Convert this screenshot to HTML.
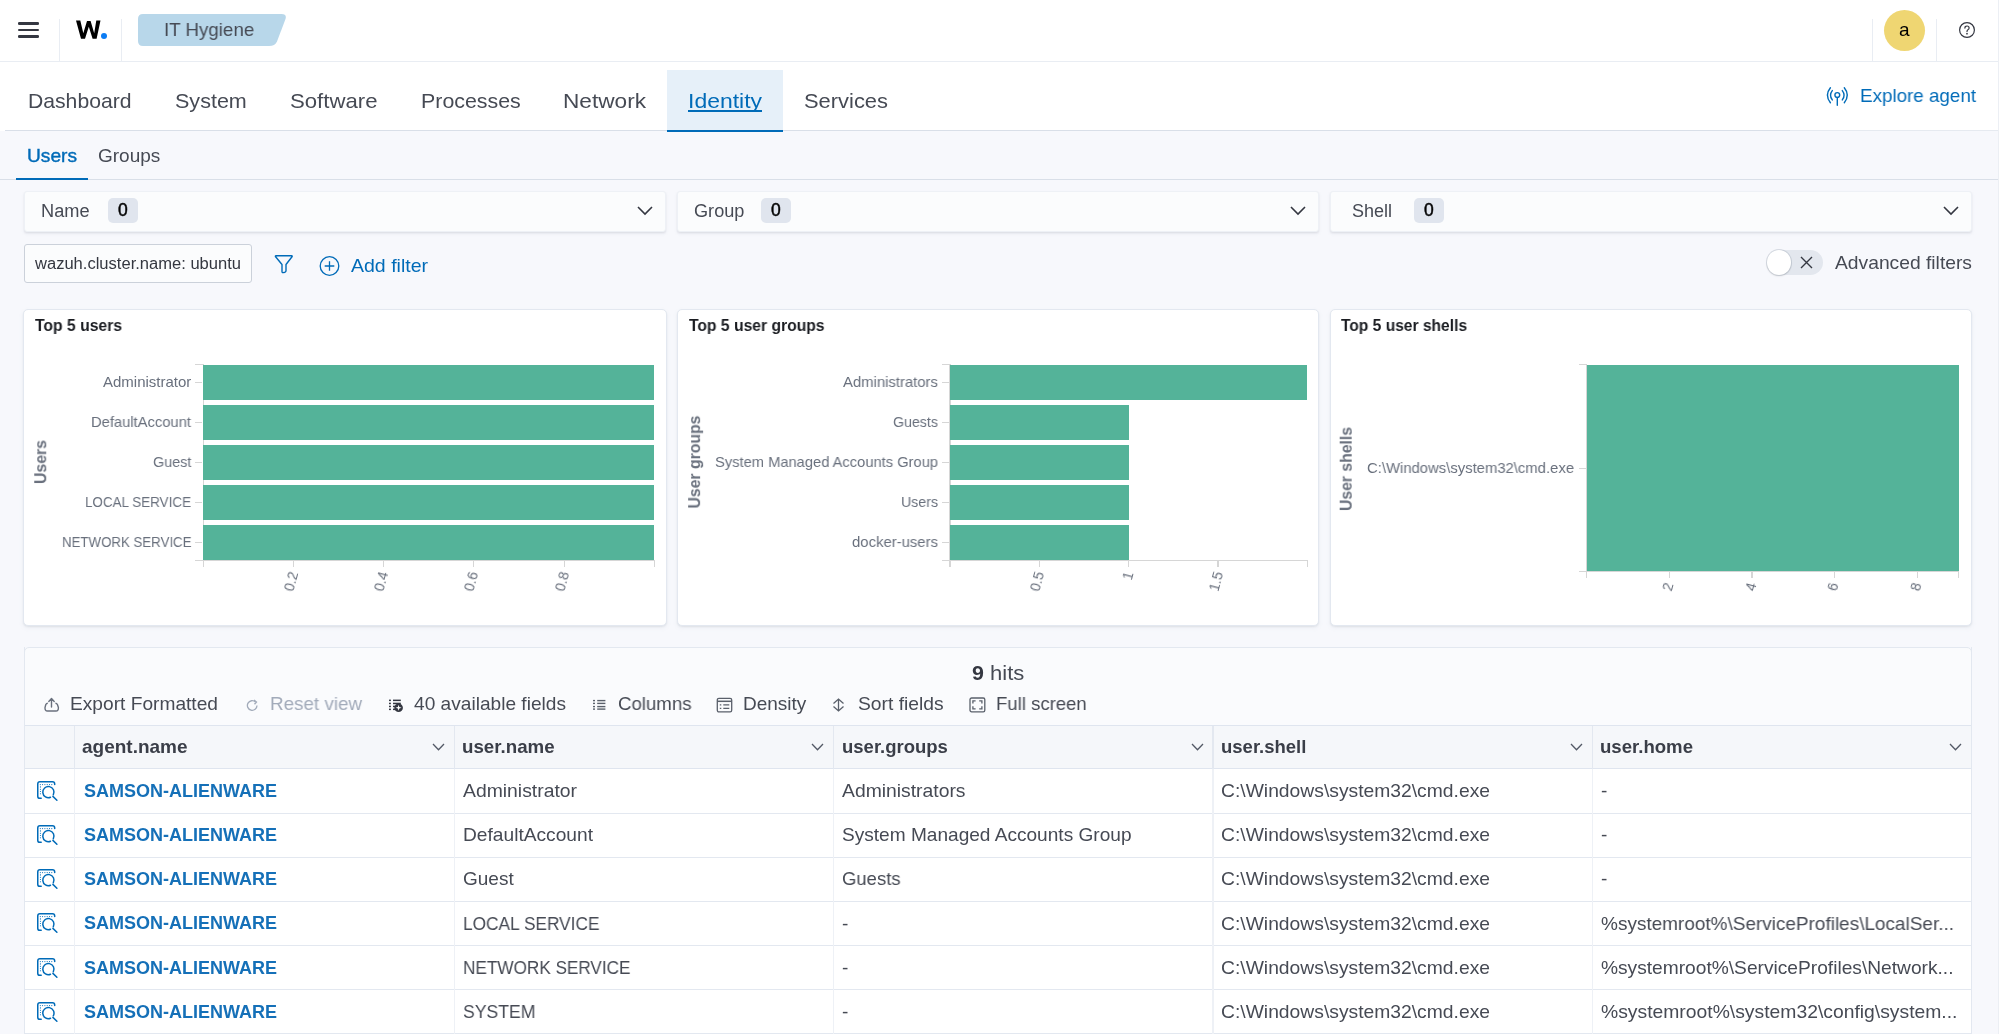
<!DOCTYPE html>
<html><head><meta charset="utf-8"><style>
html,body{margin:0;padding:0;}
body{width:1999px;height:1034px;overflow:hidden;position:relative;background:#f7f8fc;font-family:"Liberation Sans",sans-serif;}
.t{position:absolute;white-space:nowrap;line-height:1;transform-origin:0 0;will-change:transform;}
.r{position:absolute;box-sizing:border-box;}
svg{position:absolute;overflow:visible;}
</style></head><body>
<div class="r" style="left:0px;top:0px;width:1999px;height:62px;background:#ffffff;"></div>
<div class="r" style="left:0px;top:61px;width:1999px;height:1.5px;background:#e9edf3;"></div>
<div class="r" style="left:59px;top:19px;width:1px;height:43px;background:#e9edf3;"></div>
<div class="r" style="left:121px;top:19px;width:1px;height:43px;background:#e9edf3;"></div>
<div class="r" style="left:18px;top:22px;width:21px;height:2.6px;background:#343741;border-radius:1.3px;"></div>
<div class="r" style="left:18px;top:28.8px;width:21px;height:2.6px;background:#343741;border-radius:1.3px;"></div>
<div class="r" style="left:18px;top:35.2px;width:21px;height:2.6px;background:#343741;border-radius:1.3px;"></div>
<svg style="left:0;top:0" width="120" height="60"><path d="M76 20.4 H80.3 L83.3 33.2 L87 21 H90.6 L94.2 33.2 L96.3 20.4 H100.5 L96.6 38.8 H92.6 L88.8 26.8 L85 38.8 H81 Z" fill="#000"/></svg>
<div class="r" style="left:100.5px;top:33px;width:6px;height:6px;background:#0b7cf4;border-radius:50%;"></div>
<svg style="left:0;top:0" width="300" height="62"><path d="M143 14 H281.5 Q287 14 285.5 19 L277 41.5 Q275 46 269 46 H143 Q138 46 138 41 V19 Q138 14 143 14 Z" fill="#b8d7ea"/></svg>
<div class="t" style="left:164.40px;top:19.85px;font-size:19px;font-weight:400;color:#464a54;transform:scaleX(0.9855);">IT Hygiene</div>
<div class="r" style="left:1872.2px;top:19px;width:1px;height:43px;background:#e9edf3;"></div>
<div class="r" style="left:1936.2px;top:19px;width:1px;height:43px;background:#e9edf3;"></div>
<div class="r" style="left:1884px;top:9.5px;width:41px;height:41px;background:#efd672;border-radius:50%;"></div>
<div class="t" style="left:1899.21px;top:20.35px;font-size:19px;font-weight:400;color:#000000;">a</div>
<svg style="left:1958px;top:21px" width="18" height="18" viewBox="0 0 18 18"><circle cx="9" cy="9" r="7.4" fill="none" stroke="#343741" stroke-width="1.2"/><path d="M6.9 7.1 Q6.9 5 9 5 Q11.1 5 11.1 6.9 Q11.1 8.1 9.9 8.7 Q9 9.2 9 10.4" fill="none" stroke="#343741" stroke-width="1.2" stroke-linecap="round"/><circle cx="9" cy="12.7" r="0.85" fill="#343741"/></svg>
<div class="r" style="left:0px;top:62px;width:1999px;height:69px;background:#ffffff;"></div>
<div class="r" style="left:667px;top:70px;width:116px;height:61px;background:#e6f0f9;"></div>
<div class="r" style="left:5px;top:130.3px;width:1785px;height:1.2px;background:#d9dfe8;"></div>
<div class="r" style="left:1790px;top:130.3px;width:209px;height:1.2px;background:#e6eaf0;"></div>
<div class="r" style="left:667px;top:129.5px;width:116px;height:2.1px;background:#006bb8;"></div>
<div class="t" style="left:27.80px;top:90.15px;font-size:21px;font-weight:400;color:#464a54;transform:scaleX(1.0075);">Dashboard</div>
<div class="t" style="left:175.20px;top:90.15px;font-size:21px;font-weight:400;color:#464a54;transform:scaleX(1.0255);">System</div>
<div class="t" style="left:290.20px;top:90.15px;font-size:21px;font-weight:400;color:#464a54;transform:scaleX(1.0558);">Software</div>
<div class="t" style="left:420.50px;top:90.15px;font-size:21px;font-weight:400;color:#464a54;transform:scaleX(1.0179);">Processes</div>
<div class="t" style="left:563.00px;top:90.15px;font-size:21px;font-weight:400;color:#464a54;transform:scaleX(1.0775);">Network</div>
<div class="t" style="left:688.00px;top:90.15px;font-size:21px;font-weight:400;color:#006bb8;transform:scaleX(1.0928);">Identity</div>
<div class="t" style="left:804.00px;top:90.15px;font-size:21px;font-weight:400;color:#464a54;transform:scaleX(1.0431);">Services</div>
<div class="r" style="left:688px;top:110.2px;width:74px;height:1.4px;background:#006bb8;"></div>
<svg style="left:1825px;top:85px" width="24" height="22" viewBox="0 0 24 22"><g fill="none" stroke="#006bb8" stroke-width="1.4" stroke-linecap="round"><path d="M5.4 2.8 Q-0.6 10.25 5.4 17.7"/><path d="M7.3 5.6 Q3.7 10.25 7.3 14.9"/><path d="M17.3 5.6 Q20.9 10.25 17.3 14.9"/><path d="M19.3 2.8 Q25.3 10.25 19.3 17.7"/><circle cx="12.3" cy="10" r="2.4"/><path d="M12.3 12.4 V20.3"/></g></svg>
<div class="t" style="left:1859.60px;top:86.15px;font-size:19px;font-weight:400;color:#006bb8;transform:scaleX(0.9893);">Explore agent</div>
<div class="r" style="left:0px;top:178.6px;width:1999px;height:1.4px;background:#d9dfe8;"></div>
<div class="r" style="left:15.5px;top:177.6px;width:72.5px;height:2.3px;background:#006bb8;"></div>
<div class="t" style="left:27.00px;top:146.15px;font-size:19px;font-weight:400;color:#006bb8;transform:scaleX(1.0076);-webkit-text-stroke:0.4px #006bb8;">Users</div>
<div class="t" style="left:98.00px;top:146.15px;font-size:19px;font-weight:400;color:#464a54;transform:scaleX(0.9950);">Groups</div>
<div class="r" style="left:23.5px;top:190.5px;width:642px;height:41px;background:#fbfcfd;border:1px solid #eef1f6;border-radius:3px;box-shadow:0 1px 2px rgba(0,0,0,0.06),0 2px 3px rgba(152,162,179,0.15);"></div>
<div class="t" style="left:41.40px;top:201.90px;font-size:18px;font-weight:400;color:#464a54;transform:scaleX(1.0122);">Name</div>
<div class="r" style="left:107.6px;top:198.3px;width:30.2px;height:25.2px;background:#e0e5ee;border-radius:5px;"></div>
<div class="t" style="left:117.83px;top:201.93px;font-size:17.5px;font-weight:400;color:#000;-webkit-text-stroke:0.45px #000;">0</div>
<svg style="left:636.5px;top:206px" width="16" height="9" viewBox="0 0 16 9"><path d="M1 1 L8 8 L15 1" fill="none" stroke="#343741" stroke-width="1.6"/></svg>
<div class="r" style="left:676.8px;top:190.5px;width:642px;height:41px;background:#fbfcfd;border:1px solid #eef1f6;border-radius:3px;box-shadow:0 1px 2px rgba(0,0,0,0.06),0 2px 3px rgba(152,162,179,0.15);"></div>
<div class="t" style="left:693.60px;top:201.90px;font-size:18px;font-weight:400;color:#464a54;transform:scaleX(1.0074);">Group</div>
<div class="r" style="left:760.8px;top:198.3px;width:30.2px;height:25.2px;background:#e0e5ee;border-radius:5px;"></div>
<div class="t" style="left:771.03px;top:201.93px;font-size:17.5px;font-weight:400;color:#000;-webkit-text-stroke:0.45px #000;">0</div>
<svg style="left:1289.8px;top:206px" width="16" height="9" viewBox="0 0 16 9"><path d="M1 1 L8 8 L15 1" fill="none" stroke="#343741" stroke-width="1.6"/></svg>
<div class="r" style="left:1329.8px;top:190.5px;width:642px;height:41px;background:#fbfcfd;border:1px solid #eef1f6;border-radius:3px;box-shadow:0 1px 2px rgba(0,0,0,0.06),0 2px 3px rgba(152,162,179,0.15);"></div>
<div class="t" style="left:1352.00px;top:201.90px;font-size:18px;font-weight:400;color:#464a54;transform:scaleX(0.9942);">Shell</div>
<div class="r" style="left:1413.8px;top:198.3px;width:30.2px;height:25.2px;background:#e0e5ee;border-radius:5px;"></div>
<div class="t" style="left:1424.03px;top:201.93px;font-size:17.5px;font-weight:400;color:#000;-webkit-text-stroke:0.45px #000;">0</div>
<svg style="left:1942.8px;top:206px" width="16" height="9" viewBox="0 0 16 9"><path d="M1 1 L8 8 L15 1" fill="none" stroke="#343741" stroke-width="1.6"/></svg>
<div class="r" style="left:23.8px;top:244.2px;width:228.2px;height:39.2px;background:#fbfcfd;border:1.6px solid #cbd1da;border-radius:3px;"></div>
<div class="t" style="left:35.00px;top:255.70px;font-size:16px;font-weight:400;color:#343740;transform:scaleX(1.0340);">wazuh.cluster.name: ubuntu</div>
<svg style="left:274px;top:253.7px" width="20" height="20" viewBox="0 0 20 20"><path d="M2 1.8 H17.6 Q18.6 1.8 18 2.8 L12 10.5 V16.8 Q12 17.8 11 18.2 L9.2 18.6 Q8 18.9 8 17.6 V10.5 L1.6 2.8 Q1 1.8 2 1.8 Z" fill="none" stroke="#006bb8" stroke-width="1.4" stroke-linejoin="round"/></svg>
<svg style="left:318.5px;top:255.5px" width="21" height="21" viewBox="0 0 21 21"><circle cx="10.5" cy="10" r="9.3" fill="none" stroke="#006bb8" stroke-width="1.3"/><path d="M10.5 5.2 V14.8 M5.7 10 H15.3" stroke="#006bb8" stroke-width="1.3"/></svg>
<div class="t" style="left:351.00px;top:255.85px;font-size:19px;font-weight:400;color:#006bb8;transform:scaleX(1.0269);">Add filter</div>
<div class="r" style="left:1767px;top:250.2px;width:55.5px;height:25.2px;background:#e3e7ee;border-radius:13px;"></div>
<div class="r" style="left:1766.5px;top:250.3px;width:24px;height:24.5px;background:#ffffff;border-radius:50%;box-shadow:0 0 0 1px rgba(152,162,179,0.35),0 1px 2px rgba(0,0,0,0.15);"></div>
<svg style="left:1799.5px;top:256px" width="13" height="13" viewBox="0 0 13 13"><path d="M1 1 L12 12 M12 1 L1 12" stroke="#343741" stroke-width="1.4"/></svg>
<div class="t" style="left:1834.60px;top:254.28px;font-size:18.5px;font-weight:400;color:#464a54;transform:scaleX(1.0408);">Advanced filters</div>
<div class="r" style="left:23px;top:309px;width:644px;height:317px;background:#ffffff;border:1px solid #e3e8f0;border-radius:5px;box-shadow:0 1px 2px rgba(0,0,0,0.06),0 2px 4px rgba(152,162,179,0.12);"></div>
<div class="r" style="left:677px;top:309px;width:642px;height:317px;background:#ffffff;border:1px solid #e3e8f0;border-radius:5px;box-shadow:0 1px 2px rgba(0,0,0,0.06),0 2px 4px rgba(152,162,179,0.12);"></div>
<div class="r" style="left:1330px;top:309px;width:642px;height:317px;background:#ffffff;border:1px solid #e3e8f0;border-radius:5px;box-shadow:0 1px 2px rgba(0,0,0,0.06),0 2px 4px rgba(152,162,179,0.12);"></div>
<div class="t" style="left:35.30px;top:317.50px;font-size:16px;font-weight:700;color:#1a1c21;transform:scaleX(0.9817);">Top 5 users</div>
<div class="t" style="left:689.00px;top:317.50px;font-size:16px;font-weight:700;color:#1a1c21;transform:scaleX(0.9791);">Top 5 user groups</div>
<div class="t" style="left:1341.00px;top:317.50px;font-size:16px;font-weight:700;color:#1a1c21;transform:scaleX(0.9727);">Top 5 user shells</div>
<div class="r" style="left:202.70000000000002px;top:364px;width:1.2px;height:197px;background:#d6d6d6;"></div>
<div class="r" style="left:195.3px;top:364px;width:8px;height:1.2px;background:#d6d6d6;"></div>
<div class="r" style="left:203.3px;top:364.5px;width:451.0px;height:35.6px;background:#54b399;"></div>
<div class="r" style="left:195.3px;top:381.7px;width:7px;height:1.2px;background:#d6d6d6;"></div>
<div class="t" style="left:103.30px;top:373.75px;font-size:15px;font-weight:400;color:#69707d;transform:scaleX(0.9959);">Administrator</div>
<div class="r" style="left:203.3px;top:404.55px;width:451.0px;height:35.6px;background:#54b399;"></div>
<div class="r" style="left:195.3px;top:421.75px;width:7px;height:1.2px;background:#d6d6d6;"></div>
<div class="t" style="left:91.30px;top:413.80px;font-size:15px;font-weight:400;color:#69707d;transform:scaleX(0.9830);">DefaultAccount</div>
<div class="r" style="left:203.3px;top:444.6px;width:451.0px;height:35.6px;background:#54b399;"></div>
<div class="r" style="left:195.3px;top:461.8px;width:7px;height:1.2px;background:#d6d6d6;"></div>
<div class="t" style="left:152.90px;top:453.85px;font-size:15px;font-weight:400;color:#69707d;transform:scaleX(0.9593);">Guest</div>
<div class="r" style="left:203.3px;top:484.65px;width:451.0px;height:35.6px;background:#54b399;"></div>
<div class="r" style="left:195.3px;top:501.84999999999997px;width:7px;height:1.2px;background:#d6d6d6;"></div>
<div class="t" style="left:85.30px;top:493.90px;font-size:15px;font-weight:400;color:#69707d;transform:scaleX(0.8953);">LOCAL SERVICE</div>
<div class="r" style="left:203.3px;top:524.7px;width:451.0px;height:35.6px;background:#54b399;"></div>
<div class="r" style="left:195.3px;top:541.9px;width:7px;height:1.2px;background:#d6d6d6;"></div>
<div class="t" style="left:61.80px;top:533.95px;font-size:15px;font-weight:400;color:#69707d;transform:scaleX(0.8844);">NETWORK SERVICE</div>
<div class="r" style="left:195.3px;top:560px;width:459.5px;height:1.2px;background:#d6d6d6;"></div>
<div class="r" style="left:202.70000000000002px;top:560px;width:1.2px;height:7px;background:#d6d6d6;"></div>
<div class="r" style="left:653.6999999999999px;top:560px;width:1.2px;height:7px;background:#d6d6d6;"></div>
<div class="r" style="left:292.9px;top:560px;width:1.2px;height:7px;background:#d6d6d6;"></div>
<div class="t" style="left:274.03px;top:565.30px;font-size:14px;font-weight:400;color:#69707d;transform-origin:100% 50%;transform:rotate(-75deg);">0.2</div>
<div class="r" style="left:383.1px;top:560px;width:1.2px;height:7px;background:#d6d6d6;"></div>
<div class="t" style="left:364.23px;top:565.30px;font-size:14px;font-weight:400;color:#69707d;transform-origin:100% 50%;transform:rotate(-75deg);">0.4</div>
<div class="r" style="left:473.29999999999995px;top:560px;width:1.2px;height:7px;background:#d6d6d6;"></div>
<div class="t" style="left:454.43px;top:565.30px;font-size:14px;font-weight:400;color:#69707d;transform-origin:100% 50%;transform:rotate(-75deg);">0.6</div>
<div class="r" style="left:563.5px;top:560px;width:1.2px;height:7px;background:#d6d6d6;"></div>
<div class="t" style="left:544.63px;top:565.30px;font-size:14px;font-weight:400;color:#69707d;transform-origin:100% 50%;transform:rotate(-75deg);">0.8</div>
<div class="t" style="left:19.26px;top:454.00px;font-size:16px;font-weight:700;color:#69707d;transform-origin:50% 50%;transform:rotate(-90deg) scaleX(0.9891);">Users</div>
<div class="r" style="left:949.4px;top:364px;width:1.2px;height:197px;background:#d6d6d6;"></div>
<div class="r" style="left:942px;top:364px;width:8px;height:1.2px;background:#d6d6d6;"></div>
<div class="r" style="left:950px;top:364.5px;width:357.4px;height:35.6px;background:#54b399;"></div>
<div class="r" style="left:942px;top:381.7px;width:7px;height:1.2px;background:#d6d6d6;"></div>
<div class="t" style="left:843.00px;top:373.75px;font-size:15px;font-weight:400;color:#69707d;transform:scaleX(0.9910);">Administrators</div>
<div class="r" style="left:950px;top:404.55px;width:178.7px;height:35.6px;background:#54b399;"></div>
<div class="r" style="left:942px;top:421.75px;width:7px;height:1.2px;background:#d6d6d6;"></div>
<div class="t" style="left:893.00px;top:413.80px;font-size:15px;font-weight:400;color:#69707d;transform:scaleX(0.9467);">Guests</div>
<div class="r" style="left:950px;top:444.6px;width:178.7px;height:35.6px;background:#54b399;"></div>
<div class="r" style="left:942px;top:461.8px;width:7px;height:1.2px;background:#d6d6d6;"></div>
<div class="t" style="left:715.00px;top:453.85px;font-size:15px;font-weight:400;color:#69707d;transform:scaleX(0.9797);">System Managed Accounts Group</div>
<div class="r" style="left:950px;top:484.65px;width:178.7px;height:35.6px;background:#54b399;"></div>
<div class="r" style="left:942px;top:501.84999999999997px;width:7px;height:1.2px;background:#d6d6d6;"></div>
<div class="t" style="left:901.00px;top:493.90px;font-size:15px;font-weight:400;color:#69707d;transform:scaleX(0.9446);">Users</div>
<div class="r" style="left:950px;top:524.7px;width:178.7px;height:35.6px;background:#54b399;"></div>
<div class="r" style="left:942px;top:541.9px;width:7px;height:1.2px;background:#d6d6d6;"></div>
<div class="t" style="left:852.00px;top:533.95px;font-size:15px;font-weight:400;color:#69707d;transform:scaleX(0.9919);">docker-users</div>
<div class="r" style="left:942px;top:560px;width:365.9px;height:1.2px;background:#d6d6d6;"></div>
<div class="r" style="left:949.4px;top:560px;width:1.2px;height:7px;background:#d6d6d6;"></div>
<div class="r" style="left:1306.8000000000002px;top:560px;width:1.2px;height:7px;background:#d6d6d6;"></div>
<div class="r" style="left:1038.75px;top:560px;width:1.2px;height:7px;background:#d6d6d6;"></div>
<div class="t" style="left:1019.88px;top:565.30px;font-size:14px;font-weight:400;color:#69707d;transform-origin:100% 50%;transform:rotate(-75deg);">0.5</div>
<div class="r" style="left:1128.1000000000001px;top:560px;width:1.2px;height:7px;background:#d6d6d6;"></div>
<div class="t" style="left:1120.90px;top:565.30px;font-size:14px;font-weight:400;color:#69707d;transform-origin:100% 50%;transform:rotate(-75deg);">1</div>
<div class="r" style="left:1217.45px;top:560px;width:1.2px;height:7px;background:#d6d6d6;"></div>
<div class="t" style="left:1198.58px;top:565.30px;font-size:14px;font-weight:400;color:#69707d;transform-origin:100% 50%;transform:rotate(-75deg);">1.5</div>
<div class="t" style="left:648.38px;top:454.00px;font-size:16px;font-weight:700;color:#69707d;transform-origin:50% 50%;transform:rotate(-90deg) scaleX(0.9867);">User groups</div>
<div class="r" style="left:1586.0px;top:364px;width:1.2px;height:208px;background:#d6d6d6;"></div>
<div class="r" style="left:1578.6px;top:364px;width:8px;height:1.2px;background:#d6d6d6;"></div>
<div class="r" style="left:1586.6px;top:364.5px;width:372.15000000000003px;height:206.8px;background:#54b399;"></div>
<div class="r" style="left:1578.6px;top:467.5px;width:7px;height:1.2px;background:#d6d6d6;"></div>
<div class="t" style="left:1367.00px;top:459.75px;font-size:15px;font-weight:400;color:#69707d;transform:scaleX(0.9893);">C:\Windows\system32\cmd.exe</div>
<div class="r" style="left:1578.6px;top:571px;width:380.65000000000003px;height:1.2px;background:#d6d6d6;"></div>
<div class="r" style="left:1586.0px;top:571px;width:1.2px;height:7px;background:#d6d6d6;"></div>
<div class="r" style="left:1958.15px;top:571px;width:1.2px;height:7px;background:#d6d6d6;"></div>
<div class="r" style="left:1668.7px;top:571px;width:1.2px;height:7px;background:#d6d6d6;"></div>
<div class="t" style="left:1661.00px;top:575.50px;font-size:14px;font-weight:400;color:#69707d;transform-origin:100% 50%;transform:rotate(-75deg);">2</div>
<div class="r" style="left:1751.4px;top:571px;width:1.2px;height:7px;background:#d6d6d6;"></div>
<div class="t" style="left:1743.70px;top:575.50px;font-size:14px;font-weight:400;color:#69707d;transform-origin:100% 50%;transform:rotate(-75deg);">4</div>
<div class="r" style="left:1834.1px;top:571px;width:1.2px;height:7px;background:#d6d6d6;"></div>
<div class="t" style="left:1826.40px;top:575.50px;font-size:14px;font-weight:400;color:#69707d;transform-origin:100% 50%;transform:rotate(-75deg);">6</div>
<div class="r" style="left:1916.8px;top:571px;width:1.2px;height:7px;background:#d6d6d6;"></div>
<div class="t" style="left:1909.10px;top:575.50px;font-size:14px;font-weight:400;color:#69707d;transform-origin:100% 50%;transform:rotate(-75deg);">8</div>
<div class="t" style="left:1304.30px;top:460.50px;font-size:16px;font-weight:700;color:#69707d;transform-origin:50% 50%;transform:rotate(-90deg) scaleX(0.9837);">User shells</div>
<div class="r" style="left:23.6px;top:646.5px;width:1948px;height:400px;background:#fafbfd;border:1px solid #e3e8f0;border-radius:5px 5px 0 0;"></div>
<div class="t" style="left:971.50px;top:662.45px;font-size:21px;font-weight:700;color:#343741;transform:scaleX(1.0182);">9</div>
<div class="t" style="left:990.40px;top:662.45px;font-size:21px;font-weight:400;color:#464a54;transform:scaleX(1.0493);">hits</div>
<div class="t" style="left:69.80px;top:694.35px;font-size:19px;font-weight:400;color:#464a54;transform:scaleX(1.0083);">Export Formatted</div>
<svg style="left:44px;top:697px" width="16" height="16" viewBox="0 0 16 16"><path d="M7.5 10 V2 M4.8 4.5 L7.5 1.6 L10.2 4.5" fill="none" stroke="#69707d" stroke-width="1.4" stroke-linecap="round" stroke-linejoin="round"/><path d="M3.8 6.2 Q2.4 6.2 1.8 7.5 L1 10.5 Q0.8 14 3.5 14 H12 Q14.6 14 14.4 10.5 L13.4 7.5 Q12.8 6.2 11.4 6.2" fill="none" stroke="#69707d" stroke-width="1.4"/></svg>
<svg style="left:245.5px;top:698.5px" width="13" height="13" viewBox="0 0 13 13"><path d="M11 6.5 A4.8 4.8 0 1 1 9.5 3" fill="none" stroke="#a2abba" stroke-width="1.3"/><path d="M8 1 L10.5 3 L8.5 5.3" fill="none" stroke="#a2abba" stroke-width="1.3"/></svg>
<div class="t" style="left:269.80px;top:694.35px;font-size:19px;font-weight:400;color:#a2abba;transform:scaleX(0.9901);">Reset view</div>
<svg style="left:388px;top:697px" width="16" height="16" viewBox="0 0 16 16"><g fill="#343741"><rect x="1" y="2.6" width="1.9" height="1.5"/><rect x="1" y="5.7" width="1.9" height="1.5"/><rect x="1" y="8.7" width="1.9" height="1.5"/><rect x="1" y="11.6" width="1.9" height="1.5"/><rect x="5" y="2.6" width="7.8" height="1.5"/><rect x="5" y="5.7" width="7.8" height="1.5"/><rect x="5" y="8.7" width="3" height="1.5"/><rect x="5" y="11.6" width="3" height="1.5"/><circle cx="10.6" cy="10.8" r="4.3"/></g><path d="M10.6 7.8 L11.3 10.1 L13.6 10.8 L11.3 11.5 L10.6 13.8 L9.9 11.5 L7.6 10.8 L9.9 10.1 Z" fill="#fff"/></svg>
<div class="t" style="left:414.30px;top:694.35px;font-size:19px;font-weight:400;color:#464a54;transform:scaleX(1.0063);">40 available fields</div>
<svg style="left:592px;top:698px" width="15" height="14" viewBox="0 0 15 14"><g fill="#5a606b"><rect x="1" y="1.9" width="2" height="1.4"/><rect x="1" y="4.7" width="2" height="1.4"/><rect x="1" y="7.9" width="2" height="1.4"/><rect x="1" y="10.4" width="2" height="1.4"/><rect x="5.2" y="1.9" width="8.2" height="1.4"/><rect x="5.2" y="4.7" width="8.2" height="1.4"/><rect x="5.2" y="7.9" width="8.2" height="1.4"/><rect x="5.2" y="10.4" width="8.2" height="1.4"/></g></svg>
<div class="t" style="left:617.80px;top:694.35px;font-size:19px;font-weight:400;color:#464a54;transform:scaleX(0.9802);">Columns</div>
<svg style="left:715.5px;top:696.5px" width="17" height="16" viewBox="0 0 17 16"><rect x="1.3" y="1.3" width="14.4" height="13.6" rx="1.6" fill="none" stroke="#5a606b" stroke-width="1.3"/><path d="M1.3 4.3 H15.7" stroke="#5a606b" stroke-width="1.5"/><path d="M3.8 7.8 H5.3 M7.3 7.8 H13.3 M3.8 11.3 H5.3 M7.3 11.3 H13.3" stroke="#5a606b" stroke-width="1.3"/></svg>
<div class="t" style="left:742.80px;top:694.35px;font-size:19px;font-weight:400;color:#464a54;transform:scaleX(0.9943);">Density</div>
<svg style="left:832px;top:697px" width="13" height="16" viewBox="0 0 13 16"><path d="M1.5 6.5 L6.5 2 L11.5 6.5 M1.5 9.5 L6.5 14 L11.5 9.5 M6.5 2 V14" fill="none" stroke="#5a606b" stroke-width="1.3"/></svg>
<div class="t" style="left:858.40px;top:694.35px;font-size:19px;font-weight:400;color:#464a54;transform:scaleX(1.0144);">Sort fields</div>
<svg style="left:969px;top:697px" width="17" height="16" viewBox="0 0 17 16"><rect x="1" y="1" width="14.8" height="13.8" rx="1.6" fill="none" stroke="#5a606b" stroke-width="1.3"/><path d="M3.9 6.6 V3.9 H6.6 M10.2 3.9 H12.9 V6.6 M12.9 9.2 V11.9 H10.2 M6.6 11.9 H3.9 V9.2" fill="none" stroke="#5a606b" stroke-width="1.3"/></svg>
<div class="t" style="left:996.00px;top:694.35px;font-size:19px;font-weight:400;color:#464a54;transform:scaleX(0.9761);">Full screen</div>
<div class="r" style="left:24px;top:725px;width:1947px;height:44px;background:#f5f7fa;"></div>
<div class="r" style="left:24px;top:725px;width:1947px;height:1.2px;background:#dfe5ef;"></div>
<div class="r" style="left:24px;top:768.3px;width:1947px;height:1.2px;background:#dfe5ef;"></div>
<div class="r" style="left:73.60000000000001px;top:726px;width:1.2px;height:43px;background:#e3e8f0;"></div>
<div class="r" style="left:453.9px;top:726px;width:1.2px;height:43px;background:#e3e8f0;"></div>
<div class="r" style="left:833.1999999999999px;top:726px;width:1.2px;height:43px;background:#e3e8f0;"></div>
<div class="r" style="left:1212.4px;top:726px;width:1.2px;height:43px;background:#e3e8f0;"></div>
<div class="r" style="left:1591.9px;top:726px;width:1.2px;height:43px;background:#e3e8f0;"></div>
<div class="t" style="left:82.00px;top:738.27px;font-size:18.5px;font-weight:700;color:#3a3e48;transform:scaleX(1.0261);">agent.name</div>
<svg style="left:432.0px;top:742.5px" width="13" height="8" viewBox="0 0 13 8"><path d="M1 1 L6.5 6.8 L12 1" fill="none" stroke="#535966" stroke-width="1.3"/></svg>
<div class="t" style="left:462.30px;top:738.27px;font-size:18.5px;font-weight:700;color:#3a3e48;transform:scaleX(1.0117);">user.name</div>
<svg style="left:811.3px;top:742.5px" width="13" height="8" viewBox="0 0 13 8"><path d="M1 1 L6.5 6.8 L12 1" fill="none" stroke="#535966" stroke-width="1.3"/></svg>
<div class="t" style="left:841.60px;top:738.27px;font-size:18.5px;font-weight:700;color:#3a3e48;">user.groups</div>
<svg style="left:1190.5px;top:742.5px" width="13" height="8" viewBox="0 0 13 8"><path d="M1 1 L6.5 6.8 L12 1" fill="none" stroke="#535966" stroke-width="1.3"/></svg>
<div class="t" style="left:1220.80px;top:738.27px;font-size:18.5px;font-weight:700;color:#3a3e48;">user.shell</div>
<svg style="left:1570.0px;top:742.5px" width="13" height="8" viewBox="0 0 13 8"><path d="M1 1 L6.5 6.8 L12 1" fill="none" stroke="#535966" stroke-width="1.3"/></svg>
<div class="t" style="left:1600.30px;top:738.27px;font-size:18.5px;font-weight:700;color:#3a3e48;transform:scaleX(1.0049);">user.home</div>
<svg style="left:1948.5px;top:742.5px" width="13" height="8" viewBox="0 0 13 8"><path d="M1 1 L6.5 6.8 L12 1" fill="none" stroke="#535966" stroke-width="1.3"/></svg>
<div class="r" style="left:24px;top:769.0px;width:1947px;height:44.63px;background:#ffffff;"></div>
<div class="r" style="left:24px;top:813.13px;width:1947px;height:44.63px;background:#ffffff;"></div>
<div class="r" style="left:24px;top:857.26px;width:1947px;height:44.63px;background:#ffffff;"></div>
<div class="r" style="left:24px;top:901.39px;width:1947px;height:44.63px;background:#ffffff;"></div>
<div class="r" style="left:24px;top:945.52px;width:1947px;height:44.63px;background:#ffffff;"></div>
<div class="r" style="left:24px;top:989.65px;width:1947px;height:44.63px;background:#ffffff;"></div>
<div class="r" style="left:24px;top:812.53px;width:1947px;height:1.2px;background:#e3e8f0;"></div>
<div class="r" style="left:24px;top:856.66px;width:1947px;height:1.2px;background:#e3e8f0;"></div>
<div class="r" style="left:24px;top:900.79px;width:1947px;height:1.2px;background:#e3e8f0;"></div>
<div class="r" style="left:24px;top:944.92px;width:1947px;height:1.2px;background:#e3e8f0;"></div>
<div class="r" style="left:24px;top:989.05px;width:1947px;height:1.2px;background:#e3e8f0;"></div>
<div class="r" style="left:24px;top:1033.18px;width:1947px;height:1.2px;background:#e3e8f0;"></div>
<div class="r" style="left:73.60000000000001px;top:769px;width:1.2px;height:270px;background:#eef1f6;"></div>
<div class="r" style="left:453.9px;top:769px;width:1.2px;height:270px;background:#eef1f6;"></div>
<div class="r" style="left:833.1999999999999px;top:769px;width:1.2px;height:270px;background:#eef1f6;"></div>
<div class="r" style="left:1212.4px;top:769px;width:1.2px;height:270px;background:#eef1f6;"></div>
<div class="r" style="left:1591.9px;top:769px;width:1.2px;height:270px;background:#eef1f6;"></div>
<svg style="left:36.8px;top:781.0px" width="21" height="21" viewBox="0 0 21 21"><g fill="none" stroke="#006bb8" stroke-width="1.5" stroke-linecap="round"><path d="M4.2 17.3 H2.8 Q0.75 17.3 0.75 15.2 V2.9 Q0.75 0.75 2.9 0.75 H15.5 Q17.7 0.75 17.7 2.9 V3.4"/><path d="M13.5 16.3 A5.6 5.6 0 1 1 16.3 13.8"/><path d="M15.9 15.4 L19.9 19.3"/></g><g fill="#006bb8"><circle cx="3.30" cy="3.6" r="0.55"/><circle cx="5.60" cy="3.6" r="0.55"/><circle cx="7.90" cy="3.6" r="0.55"/><circle cx="10.20" cy="3.6" r="0.55"/><circle cx="12.50" cy="3.6" r="0.55"/><circle cx="14.80" cy="3.6" r="0.55"/><circle cx="3.45" cy="5.90" r="0.55"/><circle cx="3.45" cy="8.20" r="0.55"/><circle cx="3.45" cy="10.50" r="0.55"/><circle cx="3.45" cy="12.80" r="0.55"/></g></svg>
<div class="t" style="left:83.70px;top:782.00px;font-size:18px;font-weight:700;color:#1570b8;transform:scaleX(0.9979);">SAMSON-ALIENWARE</div>
<div class="t" style="left:463.00px;top:781.15px;font-size:19px;font-weight:400;color:#464a54;transform:scaleX(1.0186);">Administrator</div>
<div class="t" style="left:842.00px;top:781.15px;font-size:19px;font-weight:400;color:#464a54;transform:scaleX(1.0171);">Administrators</div>
<div class="t" style="left:1221.00px;top:781.15px;font-size:19px;font-weight:400;color:#464a54;transform:scaleX(1.0150);">C:\Windows\system32\cmd.exe</div>
<div class="t" style="left:1601.00px;top:781.15px;font-size:19px;font-weight:400;color:#464a54;">-</div>
<svg style="left:36.8px;top:825.13px" width="21" height="21" viewBox="0 0 21 21"><g fill="none" stroke="#006bb8" stroke-width="1.5" stroke-linecap="round"><path d="M4.2 17.3 H2.8 Q0.75 17.3 0.75 15.2 V2.9 Q0.75 0.75 2.9 0.75 H15.5 Q17.7 0.75 17.7 2.9 V3.4"/><path d="M13.5 16.3 A5.6 5.6 0 1 1 16.3 13.8"/><path d="M15.9 15.4 L19.9 19.3"/></g><g fill="#006bb8"><circle cx="3.30" cy="3.6" r="0.55"/><circle cx="5.60" cy="3.6" r="0.55"/><circle cx="7.90" cy="3.6" r="0.55"/><circle cx="10.20" cy="3.6" r="0.55"/><circle cx="12.50" cy="3.6" r="0.55"/><circle cx="14.80" cy="3.6" r="0.55"/><circle cx="3.45" cy="5.90" r="0.55"/><circle cx="3.45" cy="8.20" r="0.55"/><circle cx="3.45" cy="10.50" r="0.55"/><circle cx="3.45" cy="12.80" r="0.55"/></g></svg>
<div class="t" style="left:83.70px;top:826.13px;font-size:18px;font-weight:700;color:#1570b8;transform:scaleX(0.9979);">SAMSON-ALIENWARE</div>
<div class="t" style="left:463.00px;top:825.28px;font-size:19px;font-weight:400;color:#464a54;transform:scaleX(1.0089);">DefaultAccount</div>
<div class="t" style="left:842.00px;top:825.28px;font-size:19px;font-weight:400;color:#464a54;transform:scaleX(1.0041);">System Managed Accounts Group</div>
<div class="t" style="left:1221.00px;top:825.28px;font-size:19px;font-weight:400;color:#464a54;transform:scaleX(1.0150);">C:\Windows\system32\cmd.exe</div>
<div class="t" style="left:1601.00px;top:825.28px;font-size:19px;font-weight:400;color:#464a54;">-</div>
<svg style="left:36.8px;top:869.26px" width="21" height="21" viewBox="0 0 21 21"><g fill="none" stroke="#006bb8" stroke-width="1.5" stroke-linecap="round"><path d="M4.2 17.3 H2.8 Q0.75 17.3 0.75 15.2 V2.9 Q0.75 0.75 2.9 0.75 H15.5 Q17.7 0.75 17.7 2.9 V3.4"/><path d="M13.5 16.3 A5.6 5.6 0 1 1 16.3 13.8"/><path d="M15.9 15.4 L19.9 19.3"/></g><g fill="#006bb8"><circle cx="3.30" cy="3.6" r="0.55"/><circle cx="5.60" cy="3.6" r="0.55"/><circle cx="7.90" cy="3.6" r="0.55"/><circle cx="10.20" cy="3.6" r="0.55"/><circle cx="12.50" cy="3.6" r="0.55"/><circle cx="14.80" cy="3.6" r="0.55"/><circle cx="3.45" cy="5.90" r="0.55"/><circle cx="3.45" cy="8.20" r="0.55"/><circle cx="3.45" cy="10.50" r="0.55"/><circle cx="3.45" cy="12.80" r="0.55"/></g></svg>
<div class="t" style="left:83.70px;top:870.26px;font-size:18px;font-weight:700;color:#1570b8;transform:scaleX(0.9979);">SAMSON-ALIENWARE</div>
<div class="t" style="left:463.00px;top:869.41px;font-size:19px;font-weight:400;color:#464a54;">Guest</div>
<div class="t" style="left:842.00px;top:869.41px;font-size:19px;font-weight:400;color:#464a54;transform:scaleX(0.9717);">Guests</div>
<div class="t" style="left:1221.00px;top:869.41px;font-size:19px;font-weight:400;color:#464a54;transform:scaleX(1.0150);">C:\Windows\system32\cmd.exe</div>
<div class="t" style="left:1601.00px;top:869.41px;font-size:19px;font-weight:400;color:#464a54;">-</div>
<svg style="left:36.8px;top:913.39px" width="21" height="21" viewBox="0 0 21 21"><g fill="none" stroke="#006bb8" stroke-width="1.5" stroke-linecap="round"><path d="M4.2 17.3 H2.8 Q0.75 17.3 0.75 15.2 V2.9 Q0.75 0.75 2.9 0.75 H15.5 Q17.7 0.75 17.7 2.9 V3.4"/><path d="M13.5 16.3 A5.6 5.6 0 1 1 16.3 13.8"/><path d="M15.9 15.4 L19.9 19.3"/></g><g fill="#006bb8"><circle cx="3.30" cy="3.6" r="0.55"/><circle cx="5.60" cy="3.6" r="0.55"/><circle cx="7.90" cy="3.6" r="0.55"/><circle cx="10.20" cy="3.6" r="0.55"/><circle cx="12.50" cy="3.6" r="0.55"/><circle cx="14.80" cy="3.6" r="0.55"/><circle cx="3.45" cy="5.90" r="0.55"/><circle cx="3.45" cy="8.20" r="0.55"/><circle cx="3.45" cy="10.50" r="0.55"/><circle cx="3.45" cy="12.80" r="0.55"/></g></svg>
<div class="t" style="left:83.70px;top:914.39px;font-size:18px;font-weight:700;color:#1570b8;transform:scaleX(0.9979);">SAMSON-ALIENWARE</div>
<div class="t" style="left:463.00px;top:913.54px;font-size:19px;font-weight:400;color:#464a54;transform:scaleX(0.9103);">LOCAL SERVICE</div>
<div class="t" style="left:842.00px;top:913.54px;font-size:19px;font-weight:400;color:#464a54;">-</div>
<div class="t" style="left:1221.00px;top:913.54px;font-size:19px;font-weight:400;color:#464a54;transform:scaleX(1.0150);">C:\Windows\system32\cmd.exe</div>
<div class="t" style="left:1601.00px;top:913.54px;font-size:19px;font-weight:400;color:#464a54;transform:scaleX(0.9979);">%systemroot%\ServiceProfiles\LocalSer...</div>
<svg style="left:36.8px;top:957.52px" width="21" height="21" viewBox="0 0 21 21"><g fill="none" stroke="#006bb8" stroke-width="1.5" stroke-linecap="round"><path d="M4.2 17.3 H2.8 Q0.75 17.3 0.75 15.2 V2.9 Q0.75 0.75 2.9 0.75 H15.5 Q17.7 0.75 17.7 2.9 V3.4"/><path d="M13.5 16.3 A5.6 5.6 0 1 1 16.3 13.8"/><path d="M15.9 15.4 L19.9 19.3"/></g><g fill="#006bb8"><circle cx="3.30" cy="3.6" r="0.55"/><circle cx="5.60" cy="3.6" r="0.55"/><circle cx="7.90" cy="3.6" r="0.55"/><circle cx="10.20" cy="3.6" r="0.55"/><circle cx="12.50" cy="3.6" r="0.55"/><circle cx="14.80" cy="3.6" r="0.55"/><circle cx="3.45" cy="5.90" r="0.55"/><circle cx="3.45" cy="8.20" r="0.55"/><circle cx="3.45" cy="10.50" r="0.55"/><circle cx="3.45" cy="12.80" r="0.55"/></g></svg>
<div class="t" style="left:83.70px;top:958.52px;font-size:18px;font-weight:700;color:#1570b8;transform:scaleX(0.9979);">SAMSON-ALIENWARE</div>
<div class="t" style="left:463.00px;top:957.67px;font-size:19px;font-weight:400;color:#464a54;transform:scaleX(0.9031);">NETWORK SERVICE</div>
<div class="t" style="left:842.00px;top:957.67px;font-size:19px;font-weight:400;color:#464a54;">-</div>
<div class="t" style="left:1221.00px;top:957.67px;font-size:19px;font-weight:400;color:#464a54;transform:scaleX(1.0150);">C:\Windows\system32\cmd.exe</div>
<div class="t" style="left:1601.00px;top:957.67px;font-size:19px;font-weight:400;color:#464a54;transform:scaleX(1.0086);">%systemroot%\ServiceProfiles\Network...</div>
<svg style="left:36.8px;top:1001.65px" width="21" height="21" viewBox="0 0 21 21"><g fill="none" stroke="#006bb8" stroke-width="1.5" stroke-linecap="round"><path d="M4.2 17.3 H2.8 Q0.75 17.3 0.75 15.2 V2.9 Q0.75 0.75 2.9 0.75 H15.5 Q17.7 0.75 17.7 2.9 V3.4"/><path d="M13.5 16.3 A5.6 5.6 0 1 1 16.3 13.8"/><path d="M15.9 15.4 L19.9 19.3"/></g><g fill="#006bb8"><circle cx="3.30" cy="3.6" r="0.55"/><circle cx="5.60" cy="3.6" r="0.55"/><circle cx="7.90" cy="3.6" r="0.55"/><circle cx="10.20" cy="3.6" r="0.55"/><circle cx="12.50" cy="3.6" r="0.55"/><circle cx="14.80" cy="3.6" r="0.55"/><circle cx="3.45" cy="5.90" r="0.55"/><circle cx="3.45" cy="8.20" r="0.55"/><circle cx="3.45" cy="10.50" r="0.55"/><circle cx="3.45" cy="12.80" r="0.55"/></g></svg>
<div class="t" style="left:83.70px;top:1002.65px;font-size:18px;font-weight:700;color:#1570b8;transform:scaleX(0.9979);">SAMSON-ALIENWARE</div>
<div class="t" style="left:463.00px;top:1001.80px;font-size:19px;font-weight:400;color:#464a54;transform:scaleX(0.9280);">SYSTEM</div>
<div class="t" style="left:842.00px;top:1001.80px;font-size:19px;font-weight:400;color:#464a54;">-</div>
<div class="t" style="left:1221.00px;top:1001.80px;font-size:19px;font-weight:400;color:#464a54;transform:scaleX(1.0150);">C:\Windows\system32\cmd.exe</div>
<div class="t" style="left:1601.00px;top:1001.80px;font-size:19px;font-weight:400;color:#464a54;transform:scaleX(1.0169);">%systemroot%\system32\config\system...</div>
<div class="r" style="left:23.6px;top:646.5px;width:1px;height:400px;background:#e3e8f0;"></div>
<div class="r" style="left:1970.5px;top:646.5px;width:1px;height:400px;background:#e3e8f0;"></div>
<div class="r" style="left:1998px;top:0px;width:1px;height:1034px;background:#eceff4;"></div>
</body></html>
